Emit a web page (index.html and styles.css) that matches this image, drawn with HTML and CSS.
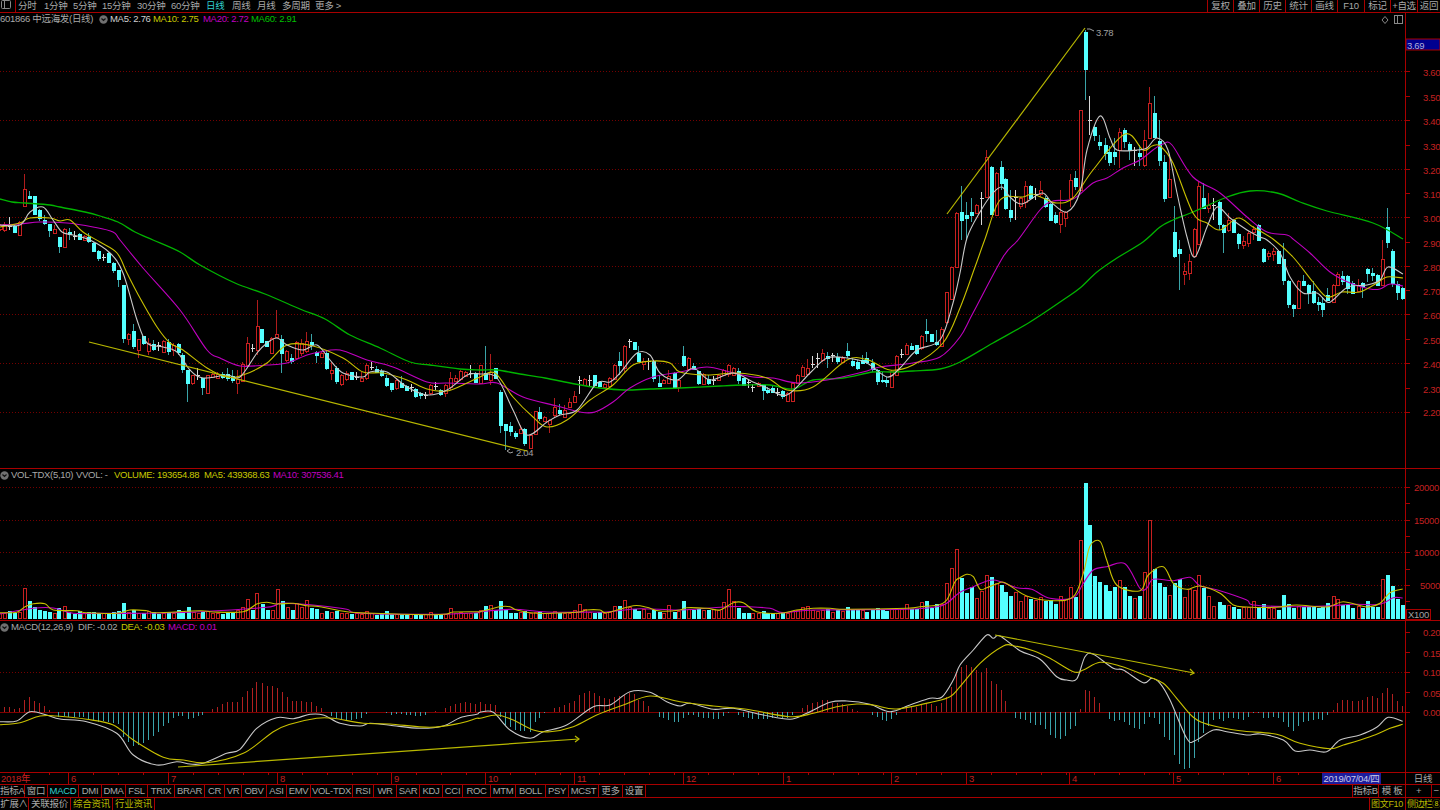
FILE: index.html
```html
<!DOCTYPE html>
<html lang="zh-CN">
<head>
<meta charset="utf-8">
<title>601866 中远海发 日线</title>
<link rel="stylesheet" href="styles.css">
</head>
<body>
<div class="app">
  <header class="topbar">
    <div class="nav">
      <span class="win-btn"><svg width="12" height="10" viewBox="0 0 12 10"><rect x="1.5" y="0.5" width="9" height="8" rx="1" class="ico"/><path d="M4.5 1v7" class="ico"/></svg></span>
      <span class="nav-item n1">分时</span><span class="nav-item n2">1分钟</span><span class="nav-item n3">5分钟</span><span class="nav-item n4">15分钟</span><span class="nav-item n5">30分钟</span><span class="nav-item n6">60分钟</span><span class="nav-item n7 cyan">日线</span><span class="nav-item n8">周线</span><span class="nav-item n9">月线</span><span class="nav-item n10">多周期</span><span class="nav-item">更多 &gt;</span>
    </div>
    <div class="tools">
      <span>复权</span><span>叠加</span><span>历史</span><span>统计</span><span>画线</span><span>F10</span><span>标记</span><span>+自选</span><span>返回</span>
    </div>
  </header>

  <section class="panel panel-main">
    <svg id="main" class="plot" viewBox="0 13 1440 455" width="1440" height="455">
      <rect x="1406" y="39" width="34" height="11" class="price-tag"/>
      <text x="1407" y="45" class="lbl tag-text">3.69</text>
      <g class="axis-labels">
        <text x="1423" y="72">3.60</text><text x="1423" y="97">3.50</text><text x="1423" y="121">3.40</text><text x="1423" y="146">3.30</text><text x="1423" y="170">3.20</text><text x="1423" y="194">3.10</text><text x="1423" y="218">3.00</text><text x="1423" y="243">2.90</text><text x="1423" y="267">2.80</text><text x="1423" y="291">2.70</text><text x="1423" y="315">2.60</text><text x="1423" y="340">2.50</text><text x="1423" y="364">2.40</text><text x="1423" y="389">2.30</text><text x="1423" y="412">2.20</text>
      </g>
      <text x="1096" y="32" class="lbl grey">3.78</text>
      <text x="516" y="452" class="lbl grey">2.04</text>
    </svg>
    <div class="legend legend-main">
      <span class="grey">601866 中远海发(日线)</span>
      <svg class="chev" width="9" height="9" viewBox="0 0 9 9"><circle cx="4.5" cy="4.5" r="4.2" class="chev-bg"/><path d="M2.5 3.5l2 2 2-2" class="chev-fg"/></svg>
      <span class="white">MA5: 2.76</span><span class="yellow">MA10: 2.75</span><span class="magenta">MA20: 2.72</span><span class="green">MA60: 2.91</span>
    </div>
    <div class="corner-icons">
      <svg width="26" height="10" viewBox="0 0 26 10"><path d="M3.5 1l3 3.5-3 3.5-3-3.5z" class="ico" transform="translate(2.5 0.5)"/><rect x="15.5" y="0.5" width="8" height="8" class="ico"/><path d="M18.5 1v7" class="ico"/></svg>
    </div>
  </section>

  <section class="panel panel-vol">
    <svg id="vol" class="plot" viewBox="0 469 1440 151" width="1440" height="151">
      <g class="axis-labels">
        <text x="1414" y="487">20000</text><text x="1414" y="520">15000</text><text x="1414" y="552">10000</text><text x="1420" y="585">5000</text>
      </g>
      <rect x="1406.5" y="609.5" width="24" height="10" class="x-box"/>
      <text x="1408" y="614.5" class="lbl grey">X100</text>
    </svg>
    <div class="legend legend-vol">
      <svg class="chev" width="9" height="9" viewBox="0 0 9 9"><circle cx="4.5" cy="4.5" r="4.2" class="chev-bg"/><path d="M2.5 3.5l2 2 2-2" class="chev-fg"/></svg>
      <span class="grey">VOL-TDX(5,10)</span><span class="grey">VVOL: -</span><span class="yellow">VOLUME: 193654.88</span><span class="yellow">MA5: 439368.63</span><span class="magenta">MA10: 307536.41</span>
    </div>
  </section>

  <section class="panel panel-macd">
    <svg id="macd" class="plot" viewBox="0 621 1440 151" width="1440" height="151">
      <g class="axis-labels">
        <text x="1423" y="632">0.20</text><text x="1423" y="653">0.15</text><text x="1423" y="672">0.10</text><text x="1423" y="693">0.05</text><text x="1423" y="712">0.00</text>
      </g>
    </svg>
    <div class="legend legend-macd">
      <svg class="chev" width="9" height="9" viewBox="0 0 9 9"><circle cx="4.5" cy="4.5" r="4.2" class="chev-bg"/><path d="M2.5 3.5l2 2 2-2" class="chev-fg"/></svg>
      <span class="grey">MACD(12,26,9)</span><span class="grey">DIF: -0.02</span><span class="yellow">DEA: -0.03</span><span class="magenta">MACD: 0.01</span>
    </div>
  </section>

  <div class="timeaxis">
    <span class="month first">2018年</span><span class="month">6</span><span class="month">7</span><span class="month">8</span><span class="month">9</span><span class="month">10</span><span class="month">11</span><span class="month">12</span><span class="month">1</span><span class="month">2</span><span class="month">3</span><span class="month">4</span><span class="month">5</span><span class="month">6</span><span class="date-tag">2019/07/04/四</span><span class="month blank"></span><span class="period">日线</span>
  </div>

  <div class="tabs">
    <nav class="tab-list">
      <span>指标A</span><span>窗口</span><span class="cyan">MACD</span><span>DMI</span><span>DMA</span><span>FSL</span><span>TRIX</span><span>BRAR</span><span>CR</span><span>VR</span><span>OBV</span><span>ASI</span><span>EMV</span><span>VOL-TDX</span><span>RSI</span><span>WR</span><span>SAR</span><span>KDJ</span><span>CCI</span><span>ROC</span><span>MTM</span><span>BOLL</span><span>PSY</span><span>MCST</span><span>更多</span><span>设置</span>
    </nav>
    <div class="tab-right">
      <span>指标B</span><span>模 板</span><span>+</span><span>−</span>
    </div>
  </div>

  <footer class="statusbar">
    <div class="status-left">
      <span>扩展∧</span><span>关联报价</span><span class="olive">综合资讯</span><span class="olive">行业资讯</span>
    </div>
    <div class="status-right">
      <span class="olive">图文F10</span><span class="olive side">侧边栏 ⑧</span>
    </div>
  </footer>
</div>
<script src="chart.js"></script>
</body>
</html>
```
FILE: styles.css
```css
:root {
  --line: #a80000;
  --dim: #740000;
  --text: #a8a8a8;
}
* { box-sizing: border-box; }
html, body { margin: 0; padding: 0; background: #000; overflow: hidden; }
body, text {
  font-family: "Liberation Sans", "Noto Sans CJK SC", sans-serif;
  font-size: 9.5px;
  letter-spacing: -0.3px;
}
.app {
  width: 1440px;
  height: 810px;
  display: flex;
  flex-direction: column;
  color: var(--text);
  line-height: 12px;
  white-space: nowrap;
}
.cyan { color: #30d0d0; }
.yellow { color: #c8c800; }
.magenta { color: #c000c0; }
.green { color: #00c000; }
.white { color: #d0d0d0; }
.grey { color: var(--text); fill: var(--text); }
.olive { color: #b8b800; }

.topbar {
  height: 13px;
  flex: none;
  display: flex;
  justify-content: space-between;
  border-bottom: 1px solid var(--line);
}
.nav { display: flex; }
.win-btn {
  width: 16px;
  height: 12px;
  margin-right: 2px;
  border-right: 1px solid var(--line);
}
.ico { fill: none; stroke: #888; stroke-width: 1; }
.nav-item { display: block; }
.n1 { width: 26px; }
.n2, .n3 { width: 29px; }
.n4 { width: 35px; }
.n5 { width: 34px; }
.n6 { width: 35px; }
.n7 { width: 26px; }
.n8 { width: 25px; }
.n9 { width: 25px; }
.n10 { width: 33px; }
.tools {
  display: grid;
  grid-template-columns: 26px 26px 26px 26px 26px 27px 26px 27px 23px;
  text-align: center;
}
.tools span { border-left: 1px solid var(--line); height: 12px; }

.panel { position: relative; flex: none; border-bottom: 1px solid var(--line); }
.panel-main { height: 456px; }
.panel-vol, .panel-macd { height: 152px; }
.plot { display: block; }
.legend {
  position: absolute;
  left: 0;
  top: 0;
  display: grid;
  align-items: center;
  height: 12px;
}
.legend-main { grid-template-columns: 99px 11px 43px 50px 48px auto; }
.legend-vol { grid-template-columns: 11px 65px 38px 90px 69px auto; }
.legend-macd { grid-template-columns: 11px 67px 43px 47px auto; }
.chev { display: block; }
.chev-bg { fill: #707070; }
.chev-fg { fill: none; stroke: #111; stroke-width: 1.2; }
.corner-icons {
  position: absolute;
  right: 35px;
  top: 2px;
  line-height: 0;
}

.axis-labels text { fill: #c42020; dominant-baseline: central; }
.lbl { dominant-baseline: central; }
text.grey { fill: #a0a0a0; }
.tag-text { fill: #b0b0d8; }
.price-tag { fill: #000090; stroke: var(--line); stroke-width: 1; }
.x-box { fill: #000; stroke: var(--line); stroke-width: 1; }
.axis { stroke: var(--line); stroke-width: 1; }
.tick { stroke: var(--line); stroke-width: 1; }
.grid { stroke: var(--dim); stroke-width: 1; stroke-dasharray: 1 2; }
.zero { stroke: #800000; stroke-width: 1; }
.wick-r { stroke: #b01c1c; stroke-width: 1; }
.wick-c { stroke: #3aa4a8; stroke-width: 1; }
.wick-w { stroke: #d8d8d8; stroke-width: 1; }
.body-r { fill: #000; stroke: #c82020; stroke-width: 1; }
.body-c { fill: #54ffff; }
.bar-r { stroke: #b02020; stroke-width: 1; }
.bar-c { stroke: #3aa4ac; stroke-width: 1; }
.line { fill: none; stroke-width: 1.1; stroke-linejoin: round; }
.ma5 { stroke: #c8c8c8; }
.ma10 { stroke: #c8c000; }
.ma20 { stroke: #c000c0; }
.ma60 { stroke: #00b400; stroke-width: 1.3; }
.trend { fill: none; stroke: #b8b800; stroke-width: 1.2; }
.leader { fill: none; stroke: #a0a0a0; stroke-width: 1; }

.timeaxis {
  height: 12px;
  flex: none;
  display: grid;
  grid-template-columns: 68px 100px 109px 114px 94px 89px 109px 100px 108px 75px 103px 104px 100px 49px 59px 24px 35px;
  border-bottom: 1px solid var(--line);
  color: #c42020;
  line-height: 11px;
}
.month {
  padding-left: 2px;
  border-left: 1px solid var(--line);
  background: repeating-linear-gradient(90deg, transparent 0 24px, var(--line) 24px 25px) top left / 100% 2px no-repeat;
}
.month.first { border-left: 0; padding-left: 1px; }
.month.blank { border-left: 0; background: none; }
.date-tag {
  background: #1c1c9c;
  color: #c8c8e8;
  text-align: center;
}
.period {
  color: var(--text);
  text-align: center;
  border-left: 1px solid var(--line);
}

.tabs {
  height: 13px;
  flex: none;
  display: flex;
  justify-content: space-between;
  border-bottom: 1px solid var(--line);
}
.tab-list {
  display: grid;
  grid-template-columns: 25px 23px 31px 23px 24px 22px 27px 30px 20px 17px 25px 20px 24px 42px 21px 23px 23px 23px 20px 28px 25px 30px 23px 30px 24px 23px;
  text-align: center;
}
.tab-list span { border-right: 1px solid var(--line); }
.tab-right {
  display: grid;
  grid-template-columns: 26px 27px 26px 9px;
  text-align: center;
}
.tab-right span { border-left: 1px solid var(--line); }

.statusbar {
  height: 12px;
  flex: none;
  display: flex;
  justify-content: space-between;
}
.status-left {
  display: grid;
  grid-template-columns: 29px 42px 42px 42px;
  text-align: center;
}
.status-left span { border-right: 1px solid var(--line); }
.status-right {
  display: grid;
  grid-template-columns: 36px 35px;
  font-size: 9px;
}
.status-right span { border-left: 1px solid var(--line); padding-left: 1px; }
.status-right .side { word-spacing: -2px; letter-spacing: -0.6px; }
```
FILE: chart.js
```js
(function () {
  // candle rows: x type bodyTop bodyBottom high low (screen pixels)
  var CANDLES = "1 r 225 229 224 231;5 r 224 230 222 232;10 w 226 226 217 230;15 c 226 232 225 233;20 r 222 235 221 236;25 r 189 206 174 206;30 c 196 198 191 199;35 c 196 214 196 214;40 c 210 218 209 221;45 c 220 223 215 225;50 c 224 230 224 237;55 r 229 233 225 233;60 c 237 246 237 253;65 r 229 247 228 247;70 c 232 234 228 240;75 w 236 236 231 240;80 c 234 239 233 240;85 r 236 240 235 240;89 c 237 241 233 243;94 c 243 251 242 252;99 c 251 258 250 261;104 w 257 257 254 261;109 c 253 262 252 263;114 c 263 270 262 273;119 c 270 279 270 287;124 c 285 338 285 343;129 r 334 339 333 345;134 c 331 346 324 349;139 r 339 350 339 358;144 c 336 343 336 345;149 r 343 351 338 355;154 c 344 349 340 351;159 w 345 345 342 351;164 r 341 352 340 353;169 c 342 351 339 355;174 r 345 350 343 356;179 c 344 352 343 355;183 c 355 369 353 373;188 c 370 383 370 402;193 r 375 383 375 385;198 w 375 375 368 380;203 c 378 387 378 395;208 r 375 393 375 393;213 r 374 377 373 378;218 r 374 378 372 379;223 c 374 377 372 379;228 c 374 378 368 381;233 c 376 380 370 383;238 r 379 383 370 394;243 r 364 381 362 382;248 r 343 365 337 367;253 w 348 348 344 352;258 r 326 350 300 355;262 c 329 342 329 342;267 c 341 346 341 347;272 r 338 353 337 354;277 r 334 337 310 338;282 c 339 353 335 373;287 r 351 360 350 362;292 c 358 361 354 364;297 r 342 358 341 359;302 r 343 353 339 356;307 r 341 351 332 353;312 c 342 344 334 350;317 c 352 355 351 363;322 r 353 357 352 358;327 c 353 368 351 370;332 r 370 373 362 380;337 c 368 381 366 384;342 r 375 384 374 386;347 r 373 379 371 381;352 c 372 379 372 380;357 w 377 377 372 380;362 r 378 381 372 382;367 r 365 378 363 380;372 w 367 367 362 370;377 c 369 372 366 373;382 c 371 375 369 377;387 c 378 385 375 387;392 c 383 389 383 392;397 r 380 388 378 390;402 c 383 387 376 388;407 c 386 390 385 391;412 w 387 387 384 392;416 c 389 396 388 398;421 c 393 395 392 399;426 w 395 395 392 399;431 r 385 393 384 395;436 w 386 386 382 390;441 c 390 394 389 396;446 r 385 393 384 397;451 r 378 387 372 390;456 r 378 381 375 382;461 r 371 379 370 381;466 r 372 376 371 377;471 w 373 373 365 378;476 c 373 382 372 383;481 r 365 383 365 384;486 c 373 379 346 380;491 r 372 380 354 385;496 c 368 378 368 379;501 c 392 425 390 433;506 c 424 430 424 450;511 c 426 431 422 436;516 c 433 436 431 439;521 r 429 433 425 433;525 c 429 443 428 446;531 r 435 448 434 449;536 r 411 434 411 435;540 c 412 418 407 421;545 r 417 421 416 422;550 r 420 424 419 433;555 r 407 415 398 418;560 c 410 413 404 415;565 r 410 417 405 417;570 r 402 407 398 408;575 r 396 402 391 403;580 w 380 380 376 394;585 r 379 385 378 386;590 w 380 380 375 386;595 c 375 385 375 386;600 c 382 386 381 387;605 r 384 387 383 388;610 r 378 386 377 387;615 r 365 379 364 380;620 c 361 365 352 375;625 r 346 368 345 373;630 w 341 341 339 348;635 c 342 349 342 350;639 c 353 361 346 362;644 r 361 364 358 370;649 w 361 361 358 370;654 c 361 378 361 382;660 c 383 386 375 387;664 r 380 383 379 384;669 r 376 383 370 384;675 c 373 387 372 388;679 r 380 387 379 392;684 c 356 365 346 367;689 r 358 369 357 370;694 c 366 369 363 370;699 c 371 383 371 385;704 r 374 384 373 385;709 c 379 383 375 385;714 w 380 380 376 385;719 r 375 380 374 381;724 r 370 375 369 376;729 r 365 374 364 377;734 r 368 375 367 376;739 c 371 380 368 384;744 c 378 385 378 386;749 w 382 382 380 388;753 w 387 387 384 392;759 r 383 386 382 387;764 c 385 390 385 400;768 c 390 392 387 394;773 c 388 392 385 393;778 w 392 392 388 396;783 c 391 396 390 399;788 r 393 401 392 402;793 r 383 401 383 402;798 r 375 383 374 384;803 r 367 376 365 377;808 r 368 374 359 375;813 w 364 364 356 368;818 w 358 358 353 368;823 r 353 360 349 362;828 c 356 358 352 368;833 w 355 355 353 362;838 c 357 361 353 364;843 r 358 362 356 363;848 c 351 355 343 358;853 c 361 365 358 367;858 c 362 368 360 370;863 c 360 363 355 364;867 c 358 362 352 364;873 c 363 369 359 372;878 c 370 381 369 385;883 c 380 381 372 383;887 c 380 382 377 387;892 r 371 387 370 387;897 r 356 375 355 376;902 w 354 354 349 358;907 r 345 354 343 355;912 c 346 349 343 350;917 c 345 353 345 355;922 r 336 348 335 350;927 c 331 333 319 342;932 c 334 341 334 342;937 c 342 344 330 346;942 r 329 346 327 347;947 r 292 322 292 324;952 r 267 299 267 300;957 r 213 267 212 267;962 c 212 220 186 240;967 c 215 218 202 240;972 c 212 215 198 222;977 r 205 213 204 214;982 w 198 198 192 225;987 r 157 197 150 197;992 c 167 214 166 214;997 r 173 215 172 216;1002 c 167 183 161 190;1006 c 179 208 178 210;1011 c 210 217 190 222;1016 w 197 197 190 220;1021 r 198 206 197 209;1026 r 186 202 181 208;1031 c 186 198 185 199;1036 w 194 194 188 200;1041 r 190 194 181 197;1046 c 198 206 196 208;1051 c 204 220 203 221;1056 c 215 222 212 224;1061 r 212 224 190 233;1066 r 212 218 211 227;1071 r 180 198 174 207;1076 c 178 186 171 190;1081 r 110 190 110 191;1086 c 32 69 30 100;1090 w 120 120 96 135;1095 c 127 135 125 141;1100 c 142 145 135 150;1106 c 145 153 138 160;1110 c 152 162 146 166;1115 c 152 156 138 165;1120 r 132 150 128 168;1125 c 130 141 128 148;1130 c 144 150 142 160;1135 w 150 150 147 166;1140 c 153 156 145 166;1145 r 140 165 130 167;1150 r 103 138 87 138;1155 c 113 137 96 138;1160 c 141 160 120 166;1165 c 162 198 155 202;1170 r 179 197 155 198;1175 c 232 256 206 258;1180 c 249 253 240 290;1185 r 271 274 263 285;1190 r 261 273 254 280;1195 r 229 256 228 257;1199 r 186 244 181 245;1204 c 198 208 183 209;1209 r 205 208 193 213;1214 w 205 205 198 220;1220 c 202 224 201 230;1224 c 225 232 224 253;1229 r 220 230 213 232;1234 c 220 232 219 233;1239 c 234 243 233 249;1244 r 241 245 236 249;1249 r 233 243 231 247;1254 r 229 232 226 240;1259 c 225 240 224 241;1264 c 249 261 248 263;1269 r 253 256 251 260;1274 r 251 254 248 261;1279 c 251 263 250 264;1284 c 259 280 243 285;1289 c 281 304 280 308;1294 c 305 308 304 317;1299 r 281 308 280 309;1304 c 281 285 275 286;1309 c 285 293 284 304;1314 c 291 302 281 304;1319 c 302 304 297 311;1323 c 303 309 297 317;1328 c 295 300 288 301;1334 r 285 302 284 303;1338 r 274 285 272 286;1343 c 276 281 271 285;1348 c 276 288 275 294;1353 c 283 293 281 294;1359 r 285 291 279 292;1363 c 283 286 282 298;1368 c 269 273 268 282;1373 c 273 275 268 281;1378 c 275 285 274 286;1383 r 259 285 240 286;1388 c 227 242 208 248;1393 c 251 283 249 287;1398 c 284 292 281 300;1403 c 288 298 287 300";

  // volume rows: x(at 3x)+type+top(at 3x), with crop origin
  var VOL = [
    [0, "0r460 14r460 29c453 44c458 60r455 75r385 89c424 104c442 120c450 134c453 149c455 165r460 178c444 194r438 208c455 224c462 239c452 253r460 268c455 283c455 297c458 313r460 327c461 342c457 357c453 372c429 387r455 402c449 417r458 431c460 447r453 462c456 477c462 492r458 507c455 521r460 536c450 550c452 566c440 581r456 596r458 610c455 624r452 640r460 655r458 670c461 685c458 700c460 714r450 729r440 743r418 758c450 772r400 788c433 803c450 818r450 833r387 848c423 863r442 878c450 891r430 906r442 921r420 937c444 952c447 966r458 981c452 997r455 1011c453 1026r460 1041r460 1056c461 1071r460 1086r462 1101r454 1115r460 1131c464 1146c463 1160c453 1175c461 1190r462 1205c461 1220c461 1234r462 1249c463 1264c463 1279r463 1294r457 1307c463 1324c463 1339r461 1353r445 1369r460 1384r457 1398r460 1413r460 1428c458"],
    [480, "3r450 18c438 33r436 47c450 62c424 78c447 92c460 107c460 122r456 136c453 152r460 167r455 181c455 196r458 210r459 225r453 240c459 255r458 270r458 285r450 299r433 315r448 330r456 345c458 360c456 375r460 390r455 404r438 420c438 435r420 449r440 465c447 478c452 493r448 508r458 523c450 539c457 552r458 568r436 584c455 597r452 612c424 627r447 642c450 657c447 671r450 687c450 702r448 716r450 731r425 746r388 762r422 776c443 791c458 806c458 820r458 836r460 852c454 865c460 880c460 895r460 910c458 925r460 940r452 954r449 968r441 984r439 999r450 1014r453 1029r450 1045c447 1060r455 1074c451 1089r452 1104c441 1119c450 1133c450 1148r450 1162c456 1178c451 1193c445 1208c451 1222c452 1236r448 1252r448 1267r448 1281r433 1296c448 1311c448 1325r427 1342c424 1356c445 1371c432 1386r432 1401r370 1415r324 1430r267"],
    [960, "5c355 20c400 35c380 50r414 65r392 80r346 95c351 110r370 125c375 138c396 153c408 168r397 183r424 198r408 214c418 228r420 243r410 258c424 273c419 288c433 303r407 317r417 332r380 347c412 362r241 377c70 391c195 406c349 421c366 437c375 451c393 466c382 480r360 495c380 511c408 526r414 540c407 556r337 570r180 585c328 600c370 615c380 630r405 645c370 660c358 674r412 689r388 705r390 718r346 733c385 748r409 763r438 780c425 793c436 808r436 823c440 838c447 853r442 868r442 883r423 898c445 912c432 928r443 942r444 957c450 972c405 987c433 1002c444 1017r437 1032c442 1047c441 1061c440 1076c444 1090c441 1105c428 1121r407 1135r416 1150c435 1164c435 1178c445 1196r437 1209c445 1225c423 1240c442 1254c442 1270r358 1284c346 1299c377 1315c418 1328c436"]
  ];

  // MACD bars: x(at 3x)+type+end(at 3x), y origin 620
  var BARS = [
    [0, "15r262 30r262 44r266 59r265 75r240 89r232 104r242 120r250 134r258 149r270 178c290 194c288 208c290 224c290 239c290 253c292 268c297 283c300 297c305 313c303 327c305 342c310 357c313 372c350 387c365 402c378 417c375 431c370 447c360 462c347 477c335 492c318 507c310 521c295 536c288 550c287 566c296 581c293 596c287 610c284 640r268 655r260 670r252 685r247 700r247 714r245 729r230 743r213 758r205 772r187 788r190 803r197 818r198 833r203 848r215 863r230 878r242 891r242 906r242 921r245 937r247 952r258 966r265 997c287 1011c295 1026c297 1041c300 1056c300 1071c297 1086c293 1101c282 1145r276 1160c280 1175c285 1190c282 1205c283 1220c285 1234c285 1249c287 1264c288 1279c285 1294r275 1307r274 1339r265 1353r258 1369r252 1384r248 1398r246 1413r248 1428r252"],
    [480, "3r247 18r252 33r252 47r256 62c290 78c315 92c322 107c330 122c333 136c332 152c335 167c307 181c295 196c280 225r264 240r260 255r256 270r248 285r243 299r225 315r218 330r214 345r220 360r228 375r235 390r237 404r232 420r228 435r225 449r220 465r222 478r240 493r243 508r258 539c291 552c295 568c300 584c306 597c305 612c293 627c285 642c285 657c292 671c293 687c293 702c298 716c296 731c288 746c280 776c285 791c292 806c294 820c297 836c297 852c297 865c298 880c295 895c292 910c295 925c295 940c285 968r265 984r255 999r250 1014r247 1029r240 1045r240 1060r248 1074r250 1089r252 1104r258 1119r268 1133r274 1178c284 1193c290 1208c300 1222c302 1236c298 1252c284 1267r275 1281r262 1296r262 1311r262 1325r254 1342r250 1356r252 1371r258 1386r250 1401r230 1415r200 1430r160"],
    [960, "5r140 20r135 35r140 50r150 65r155 80r145 95r182 110r192 125r210 138r243 168c295 183c298 198c300 214c308 228c315 243c315 258c328 273c345 288c355 303c357 317c348 332c327 347c318 362r268 377r210 391r212 406r230 421r250 451c298 466c303 480c300 495c305 511c315 526c323 540c327 556c312 570c292 585c295 600c312 615c350 630c360 645c405 660c432 674c448 689c445 705c415 718c365 733c340 748c318 763c300 780c298 793c302 808c295 823c293 838c298 853c300 868c290 883c278 898c279 912c293 928c293 942c292 957c293 972c305 987c322 1002c333 1017c318 1032c306 1047c303 1061c300 1076c298 1090c299 1105c286 1121r270 1135r250 1150r240 1164r240 1178r243 1196r242 1209r240 1225r230 1240r228 1254r235 1270r220 1284r205 1299r223 1315r243 1328r258"]
  ];

  var MA5 = "0,225 20,225 30,212 43,207 53,220 62,232 73,235 90,240 110,253 123,273 137,320 147,343 163,347 177,352 190,370 203,378 227,375 240,377 257,353 267,343 277,338 287,345 303,350 317,345 330,360 343,373 363,377 370,372 387,372 407,387 427,395 447,390 467,375 480,374 497,378 513,410 527,435 547,422 560,415 577,410 597,383 610,382 620,373 637,353 650,355 660,373 677,380 693,368 710,380 733,373 753,382 767,388 787,395 810,373 827,358 847,358 867,363 887,377 900,368 917,350 940,340 953,303 960,273 967,238 980,212 993,193 1002,187 1010,197 1022,204 1042,193 1052,203 1067,212 1080,192 1087,150 1100,116 1110,138 1117,150 1137,150 1147,148 1157,138 1168,150 1177,193 1187,237 1195,257 1207,227 1217,207 1230,218 1247,230 1260,237 1267,240 1280,253 1290,277 1303,293 1317,293 1327,302 1333,300 1348,287 1367,285 1380,280 1388,267 1403,274";
  var MA10 = "0,227 20,223 30,218 50,218 60,221 70,220 83,232 100,242 117,253 127,273 140,298 157,327 170,343 183,350 207,368 227,377 243,375 267,363 287,345 313,346 343,358 363,372 383,373 407,380 427,389 447,391 467,383 480,377 495,373 513,397 533,417 547,427 567,420 590,400 613,385 633,365 653,361 670,363 680,372 707,375 737,373 767,378 787,390 813,387 847,360 868,360 890,370 913,365 943,343 960,308 975,267 985,239 1000,200 1023,197 1032,194 1043,198 1057,203 1073,198 1093,170 1125,134 1143,150 1152,146 1160,146 1173,163 1193,213 1207,223 1220,230 1238,218 1253,227 1273,239 1293,257 1313,282 1327,297 1342,292 1360,292 1377,283 1387,277 1403,278";
  var MA20 = "0,225 20,224 40,222 67,223 93,227 113,232 120,240 143,268 180,310 207,350 220,358 240,366 267,365 287,363 307,355 320,352 340,350 367,360 393,367 427,382 447,383 480,384 497,383 523,397 557,406 580,412 595,412 613,402 630,388 653,377 680,372 707,367 730,372 753,377 773,378 797,383 827,380 863,372 880,367 913,363 940,357 960,337 973,313 1003,257 1018,240 1040,210 1053,201 1073,199 1093,183 1107,178 1123,168 1140,160 1153,150 1163,144 1172,145 1193,177 1220,193 1247,217 1267,232 1287,235 1293,239 1310,253 1330,272 1350,283 1370,289 1380,289 1390,284 1403,286";
  var MA60 = "0,199 12,202 25,203 50,205 60,207 85,212 100,216 118,222 135,232 153,240 180,252 200,265 235,283 265,294 300,309 325,319 350,335 380,348 410,362 430,365 460,369 480,370 497,370 520,374 545,378 575,384 600,388 625,390 650,389 680,388 720,386 745,385 770,385 793,389 813,380 843,378 873,372 893,372 913,371 940,369 960,362 993,343 1030,322 1063,300 1080,288 1097,272 1117,258 1143,242 1160,227 1173,220 1193,212 1227,197 1250,191 1277,193 1300,202 1327,211 1373,223 1403,239";

  var VMA5 = [[0, "0,458 50,457 75,440 100,431 135,431 160,450 230,452 260,458 350,460 390,450 440,452 470,458 600,452 640,456 730,455 770,432 800,427 830,432 880,430 920,437 960,440 1040,455 1120,460 1280,464 1340,462 1360,456 1430,455"], [480, "0,455 60,440 90,440 110,450 170,460 290,457 320,450 360,450 380,458 460,437 500,442 540,453 600,450 620,443 680,445 720,450 760,428 790,428 830,455 900,460 950,450 1000,445 1050,445 1100,448 1280,445 1320,440 1370,436 1400,420 1425,365"], [960, "0,353 20,343 40,350 60,388 80,383 110,372 135,368 200,408 280,422 340,410 370,340 390,258 420,244 440,300 470,375 540,392 565,345 610,320 640,370 680,388 720,378 780,400 820,435 860,441 950,442 1010,435 1100,441 1150,425 1220,441 1260,430 1290,398 1328,387"]];
  var VMA10 = [[0, "0,462 100,445 160,444 220,460 300,460 420,460 600,455 800,442 840,430 900,432 960,437 1040,448 1080,460 1300,463 1430,458"], [480, "0,455 100,448 200,456 340,456 380,456 480,446 600,450 740,440 800,440 870,445 910,458 1000,450 1280,448 1370,440 1400,430"], [960, "0,397 40,380 100,360 170,383 215,388 270,415 340,413 370,370 400,330 440,320 495,311 540,385 560,385 580,358 640,362 690,352 720,377 780,392 860,420 880,435 1000,440 1100,438 1180,433 1260,433 1300,413 1328,414"]];
  var DIF = [[0, "0,305 50,303 90,275 140,285 180,297 260,305 350,340 400,405 470,435 530,425 570,432 610,430 680,400 720,388 770,325 830,293 880,296 930,283 970,285 1020,310 1080,318 1110,310 1170,316 1260,325 1330,318 1380,293 1430,283"], [480, "0,277 40,277 90,330 150,355 190,335 260,315 340,260 390,255 450,215 510,217 560,245 600,258 630,250 700,268 760,265 850,285 930,298 980,280 1050,247 1100,243 1170,253 1230,275 1290,255 1350,235 1385,232 1420,180"], [960, "0,135 40,90 80,45 100,55 120,48 180,92 240,118 290,170 320,180 350,177 375,110 400,103 460,145 490,150 550,188 575,175 600,190 630,240 680,355 705,362 760,330 800,335 860,345 900,342 970,360 1005,393 1050,390 1100,395 1140,360 1200,345 1250,322 1285,292 1328,304"]];
  var DEA = [[0, "0,314 60,308 120,288 170,288 260,298 340,315 400,360 490,412 550,420 620,428 730,400 820,335 870,313 950,295 1000,295 1090,310 1170,312 1290,322 1380,310 1430,295"], [480, "0,295 50,285 100,300 160,330 210,335 280,320 350,285 430,255 510,228 600,245 700,258 800,268 930,290 1000,280 1070,260 1130,252 1180,255 1250,267 1360,245 1410,230"], [960, "0,200 60,130 130,78 160,77 220,92 270,115 340,155 370,150 420,127 480,138 560,168 610,190 650,235 700,292 750,315 840,332 950,343 1020,370 1110,386 1150,375 1230,350 1290,325 1328,313"]];

  function rnd(v) { return Math.round(v * 10) / 10; }
  function line(x1, y1, x2, y2, c) { return '<line x1="' + x1 + '" y1="' + y1 + '" x2="' + x2 + '" y2="' + y2 + '" class="' + c + '"/>'; }
  function poly(points, c) { return '<polyline points="' + points + '" class="' + c + '"/>'; }
  // a smooth curve through the sampled average values
  function curve(points, c) {
    var p = points.split(" ").map(function (s) { return s.split(",").map(Number); });
    var d = "M" + p[0][0] + " " + p[0][1];
    for (var i = 0; i < p.length - 1; i++) {
      var a = p[Math.max(i - 1, 0)], b = p[i], e = p[i + 1], f = p[Math.min(i + 2, p.length - 1)];
      d += "C" + rnd(b[0] + (e[0] - a[0]) / 6) + " " + rnd(b[1] + (e[1] - a[1]) / 6) + " " +
        rnd(e[0] - (f[0] - b[0]) / 6) + " " + rnd(e[1] - (f[1] - b[1]) / 6) + " " + e[0] + " " + e[1];
    }
    return '<path d="' + d + '" class="' + c + '"/>';
  }
  function scaled(groups, oy) {
    return groups.map(function (g) {
      return g[1].split(" ").map(function (p) {
        var a = p.split(",");
        return rnd(g[0] + a[0] / 3) + "," + rnd(oy + a[1] / 3);
      }).join(" ");
    }).join(" ");
  }
  function rows(groups, oy, fn) {
    var out = "";
    groups.forEach(function (g) {
      g[1].split(" ").forEach(function (s) {
        var m = s.match(/^(\d+)([rc])(\d+)$/);
        out += fn(Math.round(g[0] + m[1] / 3), m[2], oy + m[3] / 3);
      });
    });
    return out;
  }
  function frame(grid, ticks, top, bottom) {
    var s = grid.map(function (y) { return line(0, y + 0.5, 1405, y + 0.5, "grid"); }).join("");
    s += ticks.map(function (y) { return line(1405, y + 0.5, 1410, y + 0.5, "tick"); }).join("");
    return s + line(1405.5, top, 1405.5, bottom, "axis");
  }

  // price panel
  var main = frame([71, 120, 169, 217, 266, 314, 363, 412],
    [71, 96, 120, 145, 169, 193, 217, 242, 266, 290, 314, 339, 363, 388, 412], 13, 468);
  CANDLES.split(";").forEach(function (row) {
    var v = row.split(" "), x = +v[0], t = v[1], a = +v[2], b = +v[3], hi = +v[4], lo = +v[5];
    if (t === "w") {
      main += line(x - 0.5, hi, x - 0.5, lo, "wick-w") + line(x - 2, a + 0.5, x + 2, a + 0.5, "wick-w");
      return;
    }
    if (hi < a) main += line(x - 0.5, hi, x - 0.5, a, "wick-" + t);
    if (lo > b) main += line(x - 0.5, b, x - 0.5, lo, "wick-" + t);
    if (t === "r") {
      main += '<rect x="' + (x - 1.5) + '" y="' + (a + 0.5) + '" width="3" height="' + (b - a) + '" class="body-r"/>';
    } else {
      main += '<rect x="' + (x - 2) + '" y="' + a + '" width="4" height="' + (b - a + 1) + '" class="body-c"/>';
    }
  });
  main += curve(MA60, "line ma60") + curve(MA20, "line ma20") + curve(MA10, "line ma10") + curve(MA5, "line ma5");
  main += line(89, 342, 527, 451, "trend") + line(947, 214, 1085, 28, "trend");
  main += poly("1087,29 1090,29 1094,31", "leader") + poly("510,449 507,451 510,453 513,452", "leader");
  document.getElementById("main").insertAdjacentHTML("beforeend", main);

  // volume panel
  var vol = frame([487, 520, 552, 585], [487, 503, 520, 536, 552, 569, 585, 601], 469, 620);
  vol += rows(VOL, 460, function (x, t, y) {
    var top = Math.round(y);
    if (t === "r") return '<rect x="' + (x - 1.5) + '" y="' + (top + 0.5) + '" width="3" height="' + (618 - top) + '" class="body-r"/>';
    return '<rect x="' + (x - 2) + '" y="' + top + '" width="4" height="' + (619 - top) + '" class="body-c"/>';
  });
  vol += curve(scaled(VMA10, 460), "line ma20") + curve(scaled(VMA5, 460), "line ma10");
  document.getElementById("vol").insertAdjacentHTML("beforeend", vol);

  // MACD panel
  var macd = frame([672], [632, 652, 672, 692, 712], 621, 772);
  macd += line(0, 712.5, 1405, 712.5, "zero");
  macd += rows(BARS, 620, function (x, t, y) { return line(x - 0.5, 712, x - 0.5, Math.round(y), "bar-" + t); });
  macd += curve(scaled(DIF, 620), "line ma5") + curve(scaled(DEA, 620), "line ma10");
  macd += line(178, 767, 579, 739, "trend") + poly("575,736 579,739 575,742", "trend");
  macd += line(995, 635, 1194, 673, "trend") + poly("1190,669 1194,673 1190,675", "trend");
  document.getElementById("macd").insertAdjacentHTML("beforeend", macd);
})();
```
